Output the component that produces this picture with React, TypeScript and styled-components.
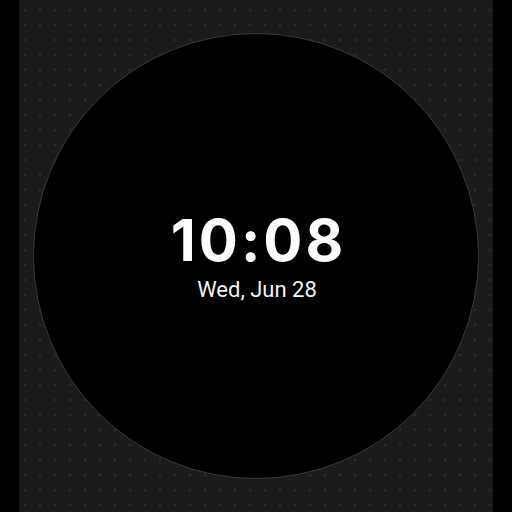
import styled, { createGlobalStyle } from "styled-components";

const GlobalStyle = createGlobalStyle`
  html, body {
    margin: 0;
    padding: 0;
    background: #000;
  }
  #root {
    height: 512px;
  }
`;

const Stage = styled.div`
  width: 474px;
  height: 512px;
  margin: 0 auto;
  background-color: #1a1a1a;
  background-image: radial-gradient(circle, #2f2f2f 1px, transparent 1.4px);
  background-size: 15px 15px;
  background-position: -1.5px 2.5px;
  display: flex;
  align-items: center;
  justify-content: center;
`;

const Face = styled.div`
  width: 446px;
  height: 446px;
  box-sizing: border-box;
  border-radius: 50%;
  background: #000;
  border: 1px solid #3a3a3a;
  display: flex;
  flex-direction: column;
  align-items: center;
  justify-content: center;
  padding-left: 2px;
`;

const Time = styled.div`
  font-family: "Inter", "DejaVu Sans", sans-serif;
  font-weight: 700;
  font-size: 58px;
  line-height: 1;
  color: #fff;
  letter-spacing: 3px;
  padding-left: 3px;
`;

const DateLine = styled.div`
  margin-top: 10px;
  font-family: "Roboto", "Liberation Sans", sans-serif;
  font-size: 22px;
  line-height: 1;
  color: #f2f2f2;
`;

export default function App() {
  return (
    <>
      <GlobalStyle />
      <Stage>
        <Face>
          <Time>10:08</Time>
          <DateLine>Wed, Jun 28</DateLine>
        </Face>
      </Stage>
    </>
  );
}
